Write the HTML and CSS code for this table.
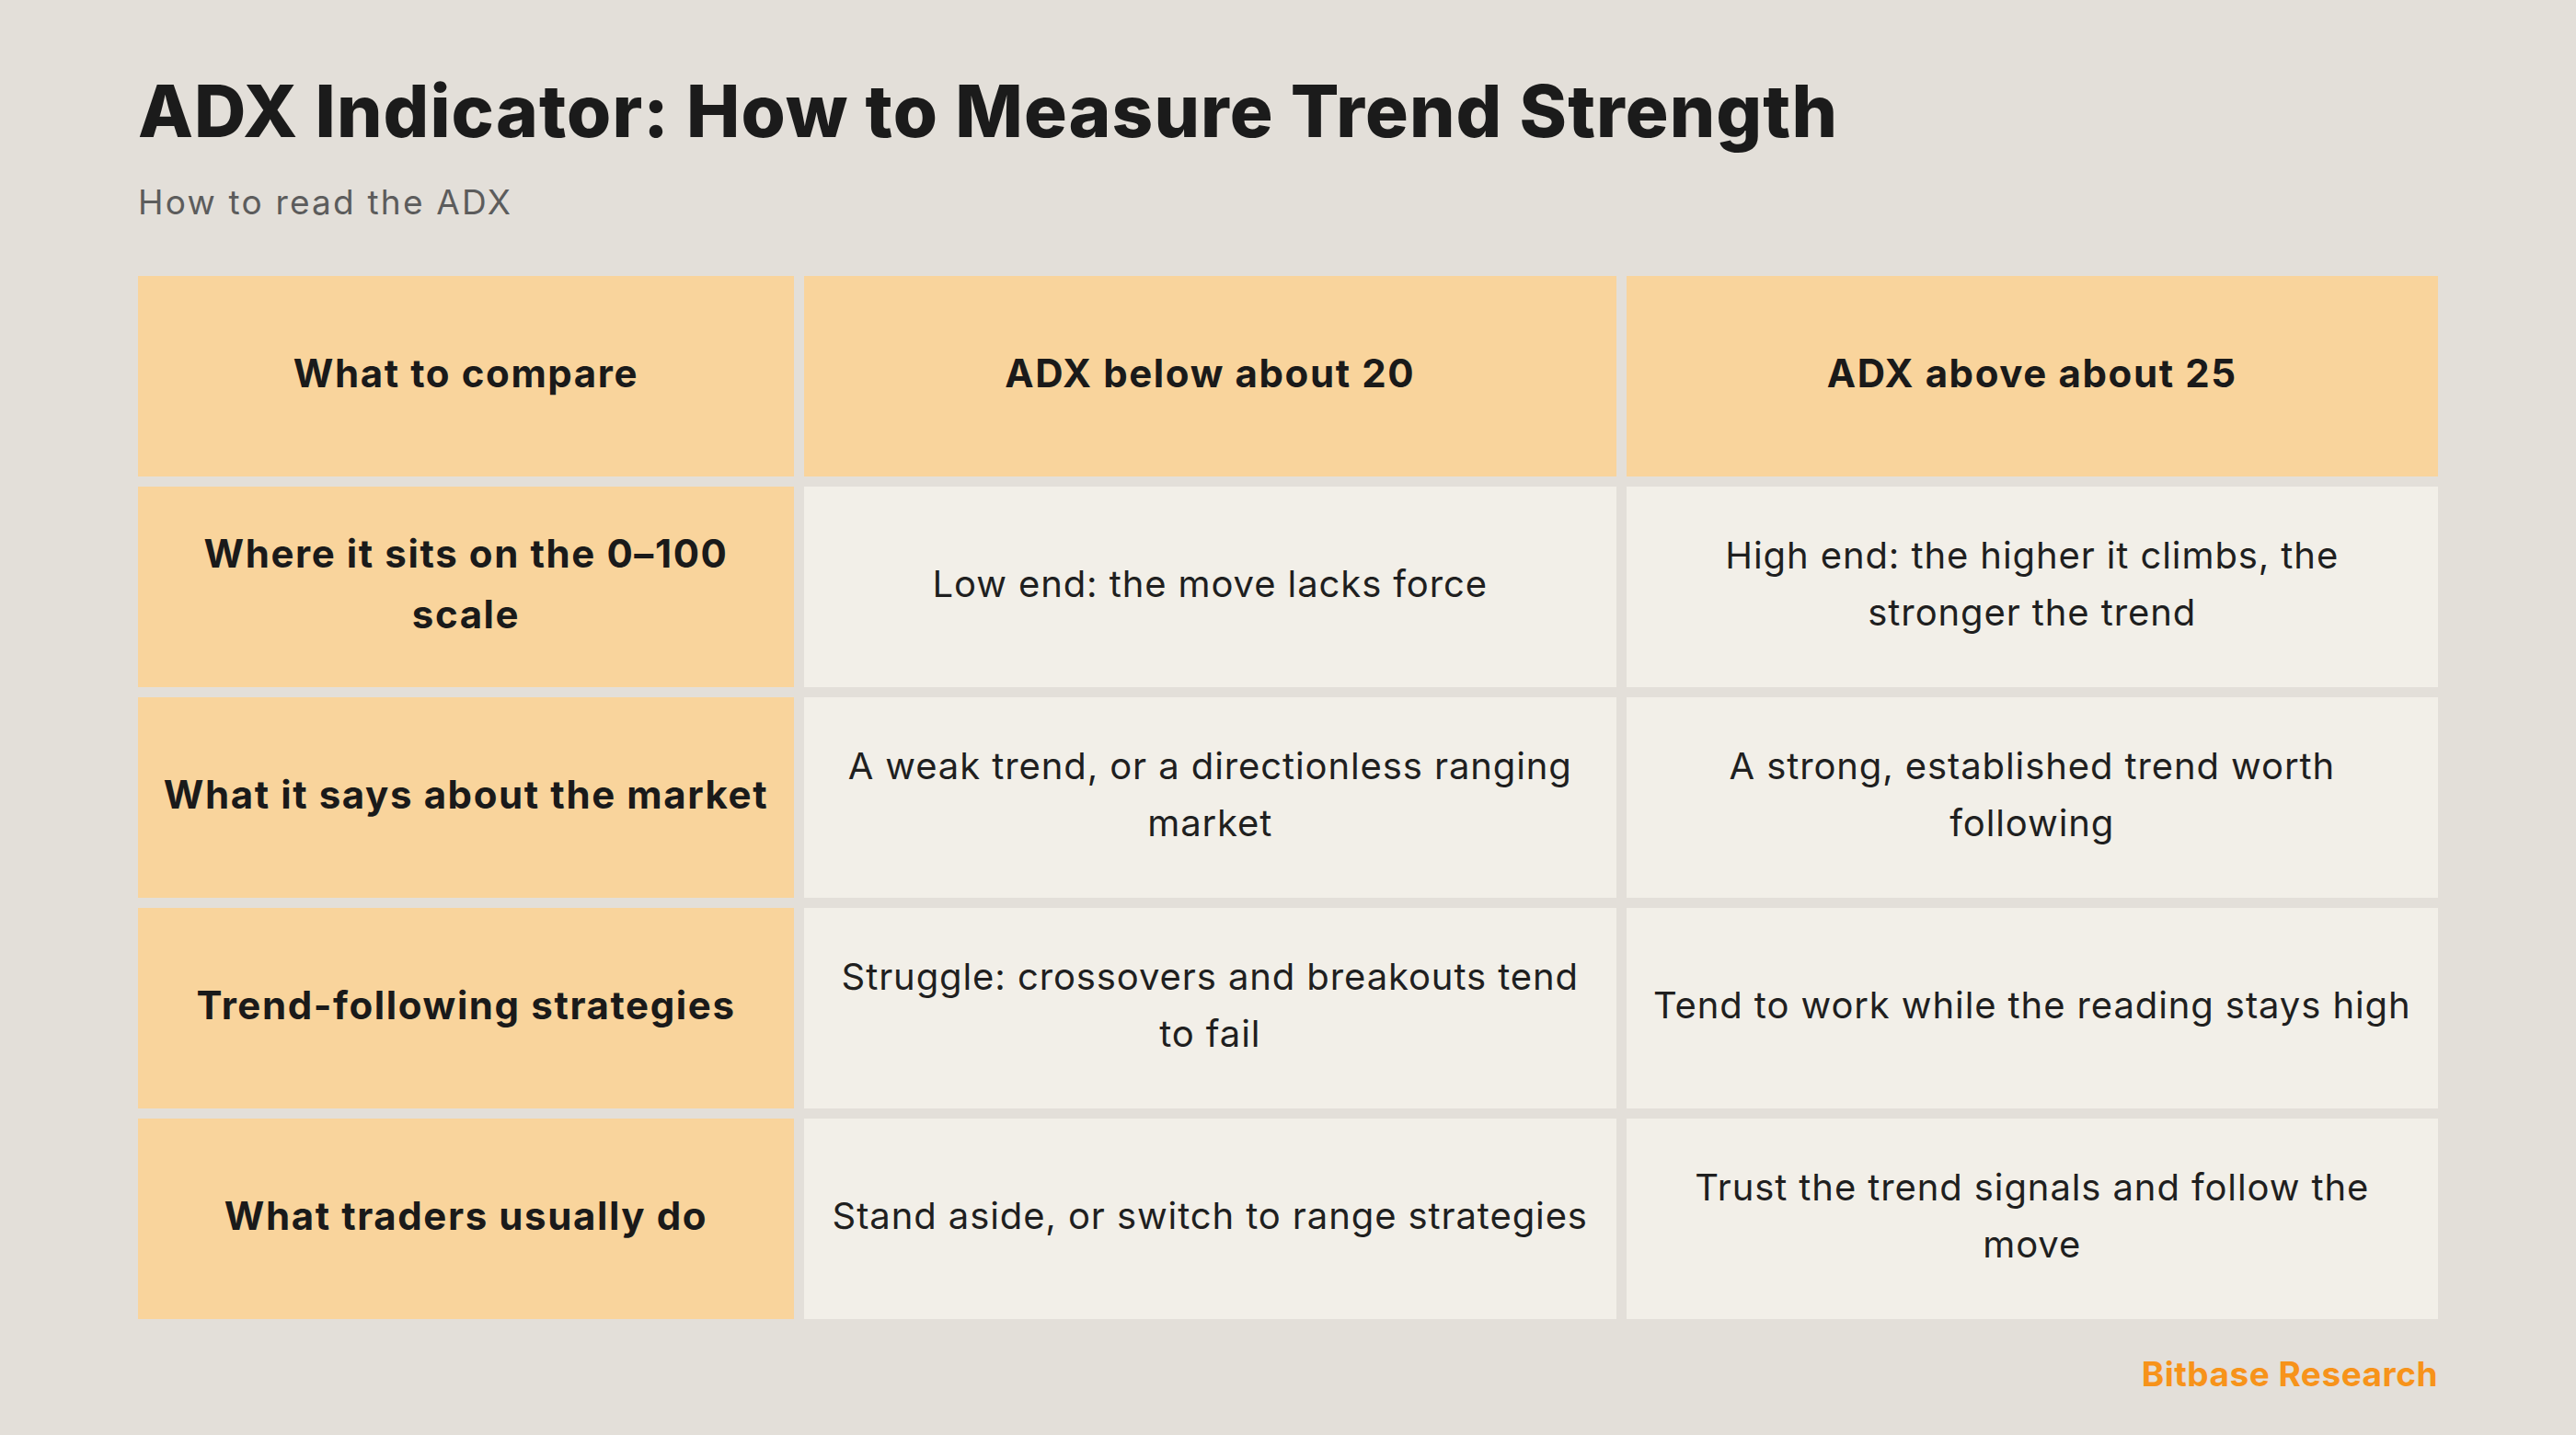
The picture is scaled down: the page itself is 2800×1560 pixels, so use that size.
FILE: index.html
```html
<!DOCTYPE html>
<html lang="en">
<head>
<meta charset="utf-8">
<title>ADX Indicator: How to Measure Trend Strength</title>
<link rel="stylesheet" href="styles.css">
</head>
<body>
<main class="page">
  <h1 class="title">ADX Indicator: How to Measure Trend Strength</h1>
  <p class="subtitle">How to read the ADX</p>
  <div class="table">
    <div class="cell head">What to compare</div>
    <div class="cell head">ADX below about 20</div>
    <div class="cell head">ADX above about 25</div>

    <div class="cell head">Where it sits on the 0–100 scale</div>
    <div class="cell body">Low end: the move lacks force</div>
    <div class="cell body">High end: the higher it climbs, the stronger the trend</div>

    <div class="cell head">What it says about the market</div>
    <div class="cell body">A weak trend, or a directionless ranging market</div>
    <div class="cell body">A strong, established trend worth following</div>

    <div class="cell head">Trend-following strategies</div>
    <div class="cell body">Struggle: crossovers and breakouts tend to fail</div>
    <div class="cell body">Tend to work while the reading stays high</div>

    <div class="cell head">What traders usually do</div>
    <div class="cell body">Stand aside, or switch to range strategies</div>
    <div class="cell body">Trust the trend signals and follow the move</div>
  </div>
  <div class="footer">Bitbase Research</div>
</main>
</body>
</html>
```
FILE: styles.css
```css
html, body {
  margin: 0;
  padding: 0;
}
body {
  background: #e3dfd9;
  font-family: "Inter", "Noto Sans", sans-serif;
  color: #1c1c1c;
}
.page {
  width: 2500px;
  padding: 82px 150px 0 150px;
  display: flex;
  flex-direction: column;
}
.title {
  margin: 0;
  font-size: 78px;
  line-height: 78px;
  font-weight: 800;
  color: #1b1b1b;
  letter-spacing: 1.1px;
}
.subtitle {
  margin: 41px 0 0 0;
  font-size: 37px;
  line-height: 37px;
  font-weight: 400;
  color: #5c5c5c;
  letter-spacing: 2.2px;
}
.table {
  margin-top: 62px;
  display: grid;
  grid-template-columns: 713px 1fr 1fr;
  grid-auto-rows: 218px;
  gap: 11px;
}
.cell {
  display: flex;
  align-items: center;
  justify-content: center;
  text-align: center;
  padding: 0 24px 7px 24px;
}
.head {
  background: #f9d49c;
  font-weight: 700;
  font-size: 42px;
  line-height: 66px;
  color: #1a1a1a;
  letter-spacing: 1.6px;
}
.body {
  background: #f2efe8;
  font-weight: 400;
  font-size: 40px;
  line-height: 62px;
  color: #1f1f1f;
  letter-spacing: 0.9px;
}
.footer {
  align-self: flex-end;
  margin-top: 41px;
  font-size: 37px;
  line-height: 37px;
  font-weight: 700;
  color: #f7931a;
  letter-spacing: 0.5px;
}
```
